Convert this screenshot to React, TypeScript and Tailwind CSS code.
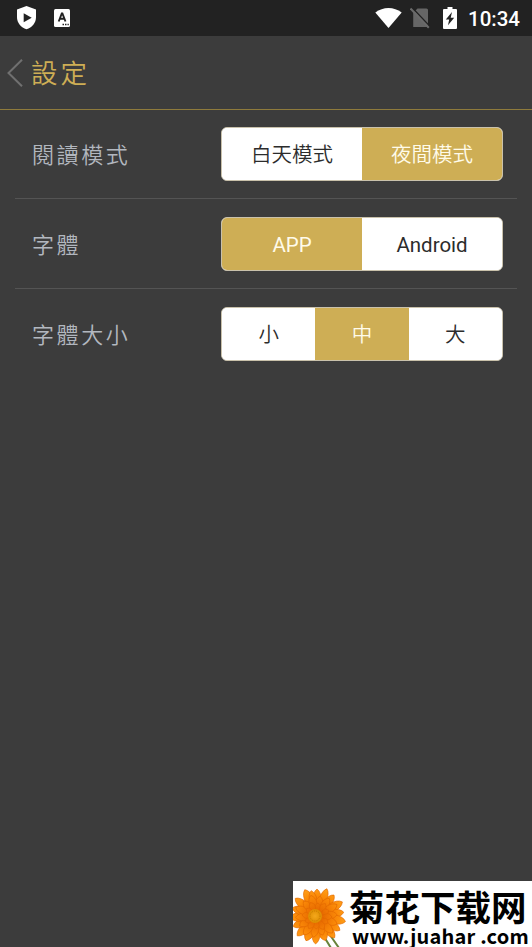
import { useState } from 'react';
import clsx from 'clsx';

// angle, length, half width
const OUTER_PETALS = [
  [0, 27, 5], [20, 29, 4.5], [39, 27, 5], [61, 29, 5.5], [82, 27, 5], [101, 29, 5.5], [122, 27, 5],
  [141, 28, 5], [161, 26, 5.5], [183, 28, 5], [204, 27, 5.5], [225, 28, 5], [246, 26, 5], [267, 27, 5.5],
  [288, 26, 5], [309, 28, 5], [335, 29, 5.5], [347, 26, 4.5],
];
const MIDDLE_PETALS = Array.from({ length: 14 }, (_, i) => [(i * 360) / 14 + 9, 20 + (i % 3) * 1.5, 4.5]);
const INNER_PETALS = Array.from({ length: 12 }, (_, i) => [(i * 360) / 12 + 4, 13 + (i % 2) * 2, 3.5]);

function StatusBar() {
  return (
    <div className="flex h-9 items-center bg-[#222222] text-white">
      <svg className="ml-4 h-6 w-[21px]" viewBox="0 0 21 24">
        <path d="M10.5 0 20 3.6V11c0 6-4 10.5-9.5 12.3C5 21.500 1 17 1 11V3.600Z" fill="currentColor" />
        <path d="M7.700 7.300v8.900l8-4.450Z" fill="#222222" />
      </svg>
      <svg className="ml-[17px] h-[18px] w-4" viewBox="0 0 16 18">
        <rect width="16" height="18" rx="1.500" fill="currentColor" />
        <path
          d="m4.700 12.500 3.100-8h.6l3.100 8M5.700 9.800h4.800"
          fill="none"
          stroke="#222222"
          strokeWidth="1.900"
        />
        <path d="M8.500 15.500h1.500M11 15.500h1.500M13.500 15.500h1.300" stroke="#222222" strokeWidth="1.300" />
      </svg>
      <svg className="ml-auto h-5 w-[27px]" viewBox="0 0 27 20">
        <path d="M.3 4.600C8.100-1.500 18.900-1.500 26.700 4.600L13.500 20Z" fill="currentColor" />
      </svg>
      <svg className="ml-[8px] h-[22px] w-5" viewBox="0 0 20 22">
        <path d="M7.500 1.500H16.500a1.500 1.500 0 0 1 1.500 1.500v17H3.200V6Z" fill="#666666" />
        <path d="M1.500 0 20 19.500" stroke="#222222" strokeWidth="1.500" />
        <path d="M.5 1.500 18.800 20.800" stroke="#6a6a6a" strokeWidth="2" />
      </svg>
      <svg className="ml-[13px] h-[22px] w-[14px]" viewBox="0 0 14 22">
        <path d="M4.500 0h5v2H13a1 1 0 0 1 1 1v18a1 1 0 0 1-1 1H1a1 1 0 0 1-1-1V3a1 1 0 0 1 1-1h3.500Z" fill="currentColor" />
        <path d="M9 5 2.800 12.600h3.400L5 18.300l6.200-7.600H7.700Z" fill="#222222" />
      </svg>
      <span className="mr-3 ml-[11px] w-[52px] pt-[2px] font-[Roboto,sans-serif] text-[20.500px] leading-none font-medium whitespace-nowrap">
        10:34
      </span>
    </div>
  );
}

function SettingRow({
  label,
  options,
  initial,
  last,
}: {
  label: string;
  options: string[];
  initial: string;
  last?: boolean;
}) {
  const [selected, setSelected] = useState(initial);

  return (
    <div
      className={clsx(
        'mx-[15px] flex h-[90px] items-center border-b pr-[14px] pl-[17px]',
        last ? 'border-transparent' : 'border-[#545454]',
      )}
    >
      <span className="w-[189px] font-['AR_PL_UKai_TW','Noto_Sans_CJK_TC',sans-serif] text-[22px] font-[350] tracking-[2.600px] text-[#b2b7bf]">
        {label}
      </span>
      <div className="flex h-[54px] flex-1 overflow-hidden rounded-md border border-[#c9c1ab] bg-white">
        {options.map((option) => (
          <button
            key={option}
            onClick={() => setSelected(option)}
            className={clsx(
              "flex-1 pt-[3px] font-[Roboto,'Noto_Sans_CJK_TC',sans-serif] text-[20.500px] leading-none",
              /^[A-Za-z]+$/.test(option) ? 'font-normal' : 'font-[350]',
              selected === option ? 'bg-[#ceae55] text-[#fffbea]' : 'bg-white text-[#2c2c2c]',
            )}
          >
            {option}
          </button>
        ))}
      </div>
    </div>
  );
}

function Petals({ items }: { items: number[][] }) {
  return items.map(([angle, length, half]) => (
    <path
      key={angle}
      d={`M0-4C${-half}-10 ${-half - 1} ${4 - length} 0 ${-length}C${half + 1} ${4 - length} ${half}-10 0-4Z`}
      transform={`rotate(${angle})`}
    />
  ));
}

function Flower() {
  return (
    <svg className="h-[66px] w-[56px] shrink-0" viewBox="0 0 56 66">
      <defs>
        <radialGradient id="petal" gradientUnits="userSpaceOnUse" cx="0" cy="0" r="31">
          <stop offset="0.2" stopColor="#e86b00" />
          <stop offset="0.65" stopColor="#fb8a08" />
          <stop offset="1" stopColor="#ffa51f" />
        </radialGradient>
        <radialGradient id="core">
          <stop offset="0" stopColor="#f5a81c" />
          <stop offset="1" stopColor="#de8d00" />
        </radialGradient>
      </defs>
      <path d="M30 54 38 67M37 54l9 13" stroke="#68833b" strokeWidth="2" fill="none" />
      <g transform="translate(24 35)" fill="url(#petal)" stroke="#e26800" strokeWidth="0.6">
        <Petals items={OUTER_PETALS} />
        <Petals items={MIDDLE_PETALS} />
        <Petals items={INNER_PETALS} />
      </g>
      <circle cx="22" cy="35" r="7" fill="url(#core)" />
      <circle cx="22" cy="35" r="5" fill="none" stroke="#c97a00" strokeWidth="1" strokeDasharray="1 1" />
    </svg>
  );
}

function SiteBadge() {
  return (
    <div className="absolute right-0 bottom-0 flex h-[66px] w-[239px] overflow-hidden bg-white font-['Noto_Sans_CJK_SC',sans-serif] font-bold whitespace-nowrap text-black">
      <Flower />
      <div>
        <div className="mt-[5px] text-[35.500px] leading-[40px]">菊花下载网</div>
        <div className="pl-[3px] text-[20px] leading-[20px] tracking-[0.200px]">www.juahar .com</div>
      </div>
    </div>
  );
}

export default function App() {
  return (
    <div className="relative h-[947px] w-[532px] overflow-hidden bg-[#3c3c3c]">
      <StatusBar />
      <header className="flex h-[74px] items-center border-b border-[#8f7b3c]">
        <svg className="ml-[7px] h-7 w-4" viewBox="0 0 16 28">
          <path d="M15 .7 1.500 14 15 27.300" fill="none" stroke="#707070" strokeWidth="2" />
        </svg>
        <h1 className="ml-2 -mt-px font-['AR_PL_UKai_TW','Noto_Sans_CJK_TC',sans-serif] text-[26.500px] font-[350] tracking-[3px] text-[#ceae55]">
          設定
        </h1>
      </header>
      <main className="-mt-px">
        <SettingRow label="閱讀模式" options={['白天模式', '夜間模式']} initial="夜間模式" />
        <SettingRow label="字體" options={['APP', 'Android']} initial="APP" />
        <SettingRow label="字體大小" options={['小', '中', '大']} initial="中" last />
      </main>
      <SiteBadge />
    </div>
  );
}
